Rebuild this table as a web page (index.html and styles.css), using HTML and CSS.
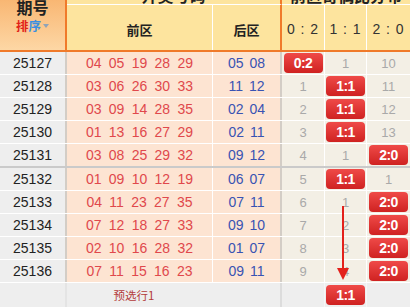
FILE: index.html
```html
<!DOCTYPE html>
<html lang="zh">
<head>
<meta charset="utf-8">
<link rel="stylesheet" href="styles.css">
</head>
<body>
<div class="chart">
  <div class="head">
    <div class="h-issue">
      <div class="h-issue-title">期号</div>
      <div class="h-sort"><span class="s-red">排</span><span class="s-blue">序</span><span class="tri"></span></div>
    </div>
    <div class="h-top h-draw">开奖号码</div>
    <div class="h-top h-dist">前区奇偶比分布</div>
    <div class="h-sub h-front">前区</div>
    <div class="h-sub h-back">后区</div>
    <div class="h-sub h-c">0 : 2</div>
    <div class="h-sub h-c">1 : 1</div>
    <div class="h-sub h-c last">2 : 0</div>
  </div>

  <div class="row">
    <div class="c-issue">25127</div>
    <div class="c-front"><span>04</span><span>05</span><span>19</span><span>28</span><span>29</span></div>
    <div class="c-back"><span>05</span><span>08</span></div>
    <div class="c-d"><span class="badge">0:2</span></div>
    <div class="c-d">1</div>
    <div class="c-d last">10</div>
  </div>
  <div class="row">
    <div class="c-issue">25128</div>
    <div class="c-front"><span>03</span><span>06</span><span>26</span><span>30</span><span>33</span></div>
    <div class="c-back"><span>11</span><span>12</span></div>
    <div class="c-d">1</div>
    <div class="c-d"><span class="badge">1:1</span></div>
    <div class="c-d last">11</div>
  </div>
  <div class="row">
    <div class="c-issue">25129</div>
    <div class="c-front"><span>03</span><span>09</span><span>14</span><span>28</span><span>35</span></div>
    <div class="c-back"><span>02</span><span>04</span></div>
    <div class="c-d">2</div>
    <div class="c-d"><span class="badge">1:1</span></div>
    <div class="c-d last">12</div>
  </div>
  <div class="row">
    <div class="c-issue">25130</div>
    <div class="c-front"><span>01</span><span>13</span><span>16</span><span>27</span><span>29</span></div>
    <div class="c-back"><span>02</span><span>11</span></div>
    <div class="c-d">3</div>
    <div class="c-d"><span class="badge">1:1</span></div>
    <div class="c-d last">13</div>
  </div>
  <div class="row group-end">
    <div class="c-issue">25131</div>
    <div class="c-front"><span>03</span><span>08</span><span>25</span><span>29</span><span>32</span></div>
    <div class="c-back"><span>09</span><span>12</span></div>
    <div class="c-d">4</div>
    <div class="c-d">1</div>
    <div class="c-d last"><span class="badge">2:0</span></div>
  </div>
  <div class="row">
    <div class="c-issue">25132</div>
    <div class="c-front"><span>01</span><span>09</span><span>10</span><span>12</span><span>19</span></div>
    <div class="c-back"><span>06</span><span>07</span></div>
    <div class="c-d">5</div>
    <div class="c-d"><span class="badge">1:1</span></div>
    <div class="c-d last">1</div>
  </div>
  <div class="row">
    <div class="c-issue">25133</div>
    <div class="c-front"><span>04</span><span>11</span><span>23</span><span>27</span><span>35</span></div>
    <div class="c-back"><span>07</span><span>11</span></div>
    <div class="c-d">6</div>
    <div class="c-d">1</div>
    <div class="c-d last"><span class="badge">2:0</span></div>
  </div>
  <div class="row">
    <div class="c-issue">25134</div>
    <div class="c-front"><span>07</span><span>12</span><span>18</span><span>27</span><span>33</span></div>
    <div class="c-back"><span>09</span><span>10</span></div>
    <div class="c-d">7</div>
    <div class="c-d">2</div>
    <div class="c-d last"><span class="badge">2:0</span></div>
  </div>
  <div class="row">
    <div class="c-issue">25135</div>
    <div class="c-front"><span>02</span><span>10</span><span>16</span><span>28</span><span>32</span></div>
    <div class="c-back"><span>01</span><span>07</span></div>
    <div class="c-d">8</div>
    <div class="c-d">3</div>
    <div class="c-d last"><span class="badge">2:0</span></div>
  </div>
  <div class="row">
    <div class="c-issue">25136</div>
    <div class="c-front"><span>07</span><span>11</span><span>15</span><span>16</span><span>23</span></div>
    <div class="c-back"><span>09</span><span>11</span></div>
    <div class="c-d">9</div>
    <div class="c-d">4</div>
    <div class="c-d last"><span class="badge">2:0</span></div>
  </div>

  <div class="row pre">
    <div class="p-issue"></div>
    <div class="p-front">预选行1</div>
    <div class="p-back"></div>
    <div class="p-d"></div>
    <div class="p-d"><span class="badge">1:1</span></div>
    <div class="p-d last"></div>
  </div>

  <svg class="arrow" width="14" height="78" viewBox="0 0 14 78">
    <line x1="7" y1="0" x2="7" y2="66" stroke="#e3211c" stroke-width="2"/>
    <polygon points="1,62 13,62 7,74" fill="#e3211c"/>
  </svg>
</div>
</body>
</html>
```

FILE: styles.css
```css
html, body {
  margin: 0;
  padding: 0;
  overflow: hidden;
  background: #ffffff;
}

.chart {
  position: relative;
  display: flow-root;
  width: 410px;
  font-family: "Liberation Sans", Arial, "Noto Sans CJK SC", sans-serif;
  font-size: 14px;
}

.head {
  display: grid;
  grid-template-columns: 67px 146px 69px 43px 42px 43px;
  grid-template-rows: 26px 45px;
  margin-top: -21px;
  background: #fde49e;
  border-bottom: 2px solid #f07a2a;
  color: #222;
}

.h-issue {
  grid-row: 1 / 3;
  grid-column: 1;
  background: linear-gradient(to bottom, #f7a95e, #fdd7a5);
  border-right: 2px solid #f07a2a;
  display: flex;
  flex-direction: column;
  align-items: center;
  justify-content: flex-end;
  padding-bottom: 17px;
  box-sizing: border-box;
}

.h-issue-title {
  font-family: "Noto Sans CJK SC", sans-serif;
  font-weight: bold;
  font-size: 16px;
  line-height: 18px;
  color: #222;
}

.h-sort {
  font-family: "Noto Sans CJK SC", sans-serif;
  font-weight: bold;
  font-size: 12.5px;
  line-height: 14px;
  margin-top: 3px;
  display: flex;
  align-items: center;
}

.s-red { color: #e2231a; }
.s-blue { color: #3a8fe0; }

.tri {
  width: 0;
  height: 0;
  border-left: 3.5px solid transparent;
  border-right: 3.5px solid transparent;
  border-top: 4px solid #8fa3b8;
  margin-left: 2px;
}

.h-top {
  grid-row: 1;
  font-family: "Noto Sans CJK SC", sans-serif;
  font-weight: bold;
  font-size: 16px;
  line-height: 20px;
  text-align: center;
  padding-top: 6px;
  border-bottom: 1px solid #ffffff;
  box-sizing: border-box;
  overflow: hidden;
}

.h-draw {
  grid-column: 2 / 4;
  border-right: 2px solid #f07a2a;
}

.h-dist {
  grid-column: 4 / 7;
}

.h-sub {
  grid-row: 2;
  display: flex;
  align-items: center;
  justify-content: center;
  padding-top: 3px;
  box-sizing: border-box;
  border-right: 1px solid #ffffff;
}

.h-front, .h-back {
  font-family: "Noto Sans CJK SC", sans-serif;
  font-weight: bold;
  font-size: 13px;
}

.h-back {
  border-right: 2px solid #f07a2a;
}

.h-c {
  font-size: 14px;
  letter-spacing: 1px;
  color: #333;
}

.h-c.last { border-right: none; }

.row {
  display: grid;
  grid-template-columns: 67px 146px 69px 43px 42px 43px;
  height: 23px;
  box-sizing: border-box;
  border-bottom: 1px solid #ffffff;
}

.row.group-end {
  height: 24px;
  border-bottom: 2px solid #cacaca;
}

.row > div {
  display: flex;
  align-items: center;
  justify-content: center;
  box-sizing: border-box;
}

.c-issue {
  background: #eeeeee;
  color: #222;
  border-right: 2px solid #d3cdc6;
}

.c-front {
  background: #fde4d2;
  color: #e0484c;
  gap: 7.3px;
  border-right: 1px solid #ffffff;
}

.c-back {
  background: #fde4d2;
  color: #3953b3;
  gap: 6px;
  border-right: 2px solid #d3cdc6;
}

.c-d {
  background: #f3efe5;
  color: #a9a9a9;
  font-size: 13px;
  border-right: 1px solid #ffffff;
}

.c-d.last { border-right: none; }

.badge {
  display: flex;
  align-items: center;
  justify-content: center;
  width: 39px;
  height: 20px;
  border-radius: 4px;
  background: linear-gradient(to bottom, #ef4a48, #cf2221);
  color: #ffffff;
  font-weight: bold;
  font-size: 14px;
  letter-spacing: -0.5px;
}

.row.pre {
  height: 24px;
  border-bottom: none;
  background: #eeeeee;
}

.p-issue {
  border-right: 2px solid #e4e4e4;
}

.p-front {
  font-family: "Noto Sans CJK SC", sans-serif;
  color: #b33a3a;
  font-size: 11.5px;
  padding-right: 12px;
}

.p-back {
  border-right: 2px solid #dcdcdc;
}

.p-d {
  border-right: 1px solid #f6f6f6;
}

.p-d.last { border-right: none; }

.arrow {
  position: absolute;
  left: 336px;
  top: 206px;
}
```
